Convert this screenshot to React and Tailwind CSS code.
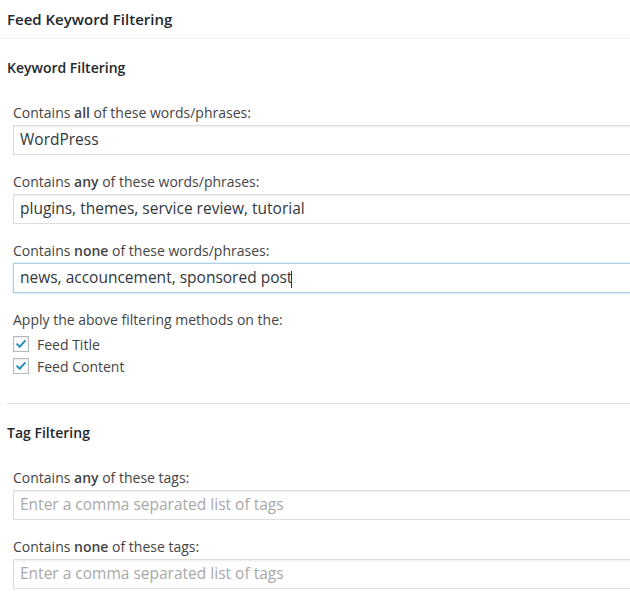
import React from 'react';

function Check() {
  return (
    <span className="w-4 h-4 border border-[#b4b9be] bg-white flex items-center justify-center shadow-[inset_0_1px_2px_rgba(0,0,0,0.1)]">
      <svg viewBox="0 0 16 16" className="w-[14px] h-[14px]">
        <path d="M3.5 8.2 L6.5 11.2 L12.5 4.5" fill="none" stroke="#1e8cbe" strokeWidth="2.2" strokeLinecap="round" strokeLinejoin="round" />
      </svg>
    </span>
  );
}

function Field({ pre, bold, post, value, placeholder, focused }) {
  return (
    <div className="mb-[18px]">
      <div className="text-[14px] leading-[18px] text-[#444] mb-[3px]">
        {pre}<span className="font-semibold">{bold}</span>{post}
      </div>
      <div
        className={
          'h-[30px] w-[700px] flex items-center px-[6px] text-[15.5px] bg-white ' +
          (focused
            ? 'border border-[#a9d0e3] shadow-[0_0_2px_rgba(30,140,190,0.35)]'
            : 'border border-[#ddd] shadow-[inset_0_1px_2px_rgba(0,0,0,0.07)]')
        }
      >
        {value ? (
          <span className="text-[#32373c]">
            {value}
            {focused && <span className="inline-block w-px h-[17px] bg-[#32373c] align-middle -ml-[1px]" />}
          </span>
        ) : (
          <span className="text-[#a8a8a8]">{placeholder}</span>
        )}
      </div>
    </div>
  );
}

export default function App() {
  return (
    <div className="w-[630px] h-[600px] overflow-hidden bg-white" style={{ fontFamily: '"Open Sans", "Noto Sans", sans-serif' }}>
      <div className="h-[39px] border-b border-[#eee] flex items-center px-[7px]">
        <h2 className="text-[15px] font-semibold text-[#23282d]">Feed Keyword Filtering</h2>
      </div>

      <div className="pl-[7px]">
        <h3 className="mt-[20px] text-[14px] leading-[18px] font-semibold text-[#23282d]">Keyword Filtering</h3>

        <div className="pl-[6px] mt-[27px]">
          <Field pre="Contains " bold="all" post=" of these words/phrases:" value="WordPress" />
          <Field pre="Contains " bold="any" post=" of these words/phrases:" value="plugins, themes, service review, tutorial" />
          <Field pre="Contains " bold="none" post=" of these words/phrases:" value="news, accouncement, sponsored post" focused />

          <div className="text-[14px] leading-[18px] text-[#444]">Apply the above filtering methods on the:</div>
          <div className="mt-[4px]">
            <label className="flex items-center gap-[8px] h-[22px] text-[14px] text-[#444]">
              <Check />
              Feed Title
            </label>
            <label className="flex items-center gap-[8px] h-[22px] text-[14px] text-[#444]">
              <Check />
              Feed Content
            </label>
          </div>
        </div>

        <div className="mt-[26px] border-t border-[#ddd]" />

        <h3 className="mt-[20px] text-[14px] leading-[18px] font-semibold text-[#23282d]">Tag Filtering</h3>

        <div className="pl-[6px] mt-[27px]">
          <Field pre="Contains " bold="any" post=" of these tags:" placeholder="Enter a comma separated list of tags" />
          <Field pre="Contains " bold="none" post=" of these tags:" placeholder="Enter a comma separated list of tags" />
        </div>
      </div>
    </div>
  );
}
